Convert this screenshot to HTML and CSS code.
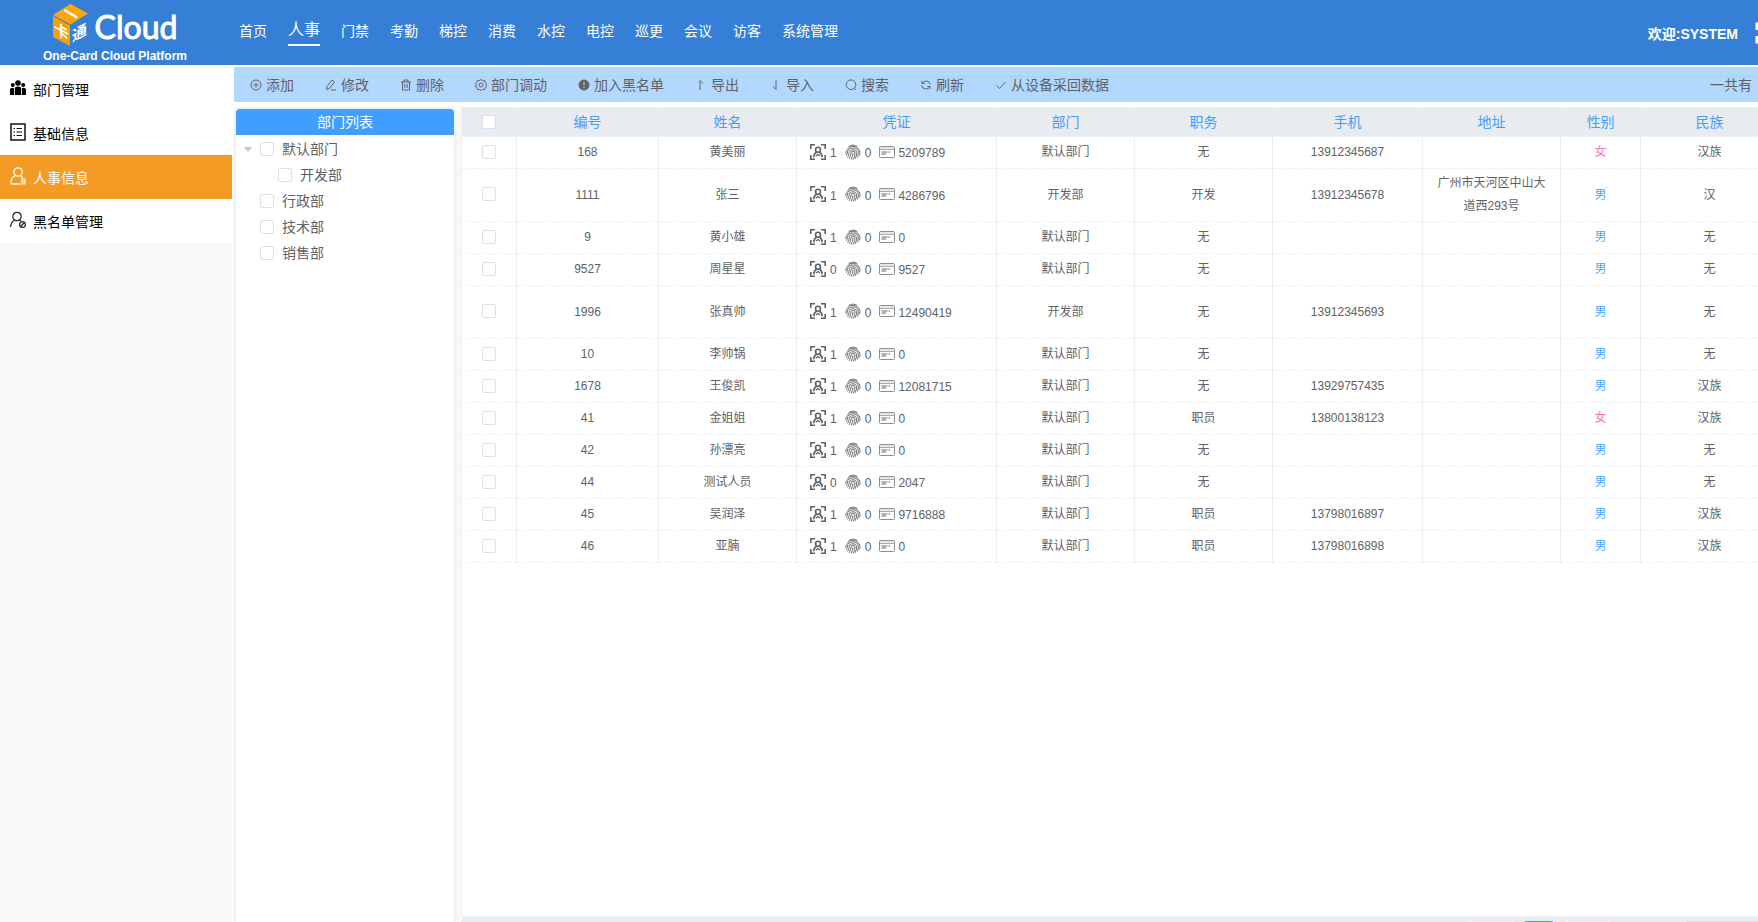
FILE: index.html
```html
<!DOCTYPE html>
<html lang="zh-CN">
<head>
<meta charset="utf-8">
<title>One-Card Cloud Platform</title>
<link rel="stylesheet" href="styles.css">
</head>
<body>
<svg class="sprite" aria-hidden="true">
  <symbol id="face" viewBox="0 0 16 16"><g fill="none" stroke="currentColor" stroke-width="1.6"><path d="M.8 5V.8H5M11 .8h4.200V5M15.200 11v4.200H11M5 15.200H.8V11"/><circle cx="8" cy="5.800" r="2.500"/><path d="M3.800 13.200c0-2.600 1.200-4.200 2.800-5M12.200 13.200c0-2.600-1.200-4.200-2.800-5"/><path d="M6 12l2-1.500 2 1.500" stroke-width="1.200"/></g></symbol>
  <symbol id="finger" viewBox="0 0 16 16"><g fill="none" stroke="currentColor" stroke-width=".9" stroke-linecap="round"><path d="M4 2.200Q8-.5 12 2.200M1.800 5.500Q4 2.300 8 2.300t6.300 3.500q1.100 2.700.4 5.200M.8 9.500q-.1-1.300.3-2.500M1.500 11.500Q2.500 9.500 2.500 8q.3-4 5.500-4t5.300 4.200q.1 2.800-.8 5M2.800 13.200Q4.200 11 4.200 8.500q0-2.800 3.700-2.800t3.800 2.800q.1 3-1.400 6M4.300 14.500Q6 11.500 6 9q0-1.700 2-1.700T10 9q0 3-1.600 6.300M6.300 15.200Q8 12 8 9.200"/></g></symbol>
  <symbol id="card" viewBox="0 0 16 16"><rect x=".5" y="2.500" width="15" height="11" rx="1" fill="#fff" stroke="#8a8d92"/><path d="M1 3h14v2.500H1z" fill="#e4e6ea"/><path d="M1 5.500h14" stroke="#a9acb1"/><path d="M2.500 8h6M9.500 8h1.500M2.500 10H7" stroke="#606266"/></symbol>
</svg>
<div class="app">
<header class="topbar">
  <div class="brand">
    <div class="brand-logo">
      <svg class="cube" width="36" height="43" viewBox="0 0 36 43" aria-hidden="true">
        <path d="M17.500 0 35 9.500 17.500 20.500 0 11z" fill="#fea60f"/>
        <path d="M0 12l17 9.500V42L0 33z" fill="#fa9d08"/>
        <path d="M11.500 6 24 13.500" stroke="#fff" stroke-width="2.500"/>
        <text class="cube-text" transform="translate(1 29) skewY(28)" font-size="15">卡</text>
        <text class="cube-text" transform="translate(19 38) skewY(-28)" font-size="15">通</text>
      </svg>
      <span class="brand-name">Cloud</span>
    </div>
    <div class="brand-sub">One-Card Cloud Platform</div>
  </div>
  <nav class="mainnav">
    <a href="#">首页</a><a href="#" class="current">人事</a><a href="#">门禁</a><a href="#">考勤</a><a href="#">梯控</a><a href="#">消费</a><a href="#">水控</a><a href="#">电控</a><a href="#">巡更</a><a href="#">会议</a><a href="#">访客</a><a href="#">系统管理</a>
  </nav>
  <div class="welcome">欢迎:SYSTEM</div>
  <button class="fullscreen" aria-label="全屏"><svg width="22" height="22" viewBox="0 0 22 22" fill="none" stroke="#fff" stroke-width="3"><path d="M2 8V2h6M14 2h6v6M20 14v6h-6M8 20H2v-6"/></svg></button>
</header>
<div class="body">
<nav class="sidebar">
  <a href="#"><svg width="16" height="18" viewBox="0 0 16 18"><circle cx="8" cy="4" r="2.800"/><circle cx="2.800" cy="6" r="2"/><circle cx="13.200" cy="6" r="2"/><path d="M4.800 16V9.500Q4.800 7.500 8 7.500t3.200 2V16zM0 16v-5.500Q0 8.800 2.500 8.800q1.500 0 1.500.7V16zM16 16v-5.500q0-1.700-2.500-1.700-1.500 0-1.500.7V16z"/></svg>部门管理</a>
  <a href="#"><svg width="16" height="18" viewBox="0 0 16 18" fill="none" stroke="#111"><path d="M1 1h14v16H1z" stroke-width="1.500"/><path d="M3.500 5.500H5M3.500 9H5M3.500 12.500H5M6.500 5.500H12M6.500 9H12M6.500 12.500H12" stroke-width="1.200"/></svg>基础信息</a>
  <a href="#" class="active"><svg width="16" height="18" viewBox="0 0 16 18" fill="none" stroke="#fff" stroke-width="1.300"><circle cx="8" cy="5" r="4.200"/><path d="M5.500 8.500Q.8 11 .8 15.500q0 1.500 1.500 1.500H10M10.500 8.500l2.500 2.500"/><path d="M11.500 12h4v5h-4z" fill="#fff" opacity=".6"/></svg>人事信息</a>
  <a href="#"><svg width="16" height="18" viewBox="0 0 16 18" fill="none" stroke="#222" stroke-width="1.200"><circle cx="7" cy="5.500" r="4.200"/><path d="M4.500 9Q.8 11.500.6 16M9.500 9l1.500 1"/><circle cx="12.500" cy="13.500" r="2.900"/><path d="M10.500 15.500l4-4"/></svg>黑名单管理</a>
</nav>
<main class="main">
  <div class="toolbar">
    <button><svg viewBox="0 0 14 14"><circle cx="7" cy="7" r="5"/><path d="M7 4.500v5M4.500 7h5"/></svg>添加</button>
    <button><svg viewBox="0 0 14 14"><path d="M2.500 11.500l.5-3L8 2l2.500 2-5 6.500zM7 12h5"/></svg>修改</button>
    <button><svg viewBox="0 0 14 14"><path d="M2 4h10M5 4V2h4v2M3.500 4v8h7V4M5.800 6v4M8.200 6v4"/></svg>删除</button>
    <button><svg viewBox="0 0 14 14"><path d="M7 1.500l1.500 1 2-.2.500 2 1.500 1-.7 1.700.7 1.700-1.500 1-.5 2-2-.2-1.500 1-1.500-1-2 .2-.5-2-1.500-1L2.200 7l-.7-1.700 1.500-1 .5-2 2 .2z"/><circle cx="7" cy="7" r="2"/></svg>部门调动</button>
    <button><svg viewBox="0 0 14 14"><circle cx="7" cy="7" r="5" fill="#606266"/><path d="M7 4v3.500M7 8.700V10" stroke="#b3d8ff"/></svg>加入黑名单</button>
    <button><svg viewBox="0 0 14 14"><path d="M6 12V2.500L9 5.500"/></svg>导出</button>
    <button><svg viewBox="0 0 14 14"><path d="M7 2v9.500L4 8.500"/></svg>导入</button>
    <button><svg viewBox="0 0 14 14"><circle cx="7" cy="6.700" r="4.800"/><path d="M10.300 10.200l1.500 1.600"/></svg>搜索</button>
    <button><svg viewBox="0 0 14 14"><path d="M3 2.800v2.700h2.700M3.200 5.300a4.400 4.400 0 0 1 8.200 1.200M11 11.200V8.500H8.300M10.800 8.700A4.400 4.400 0 0 1 2.600 7.500"/></svg>刷新</button>
    <button><svg viewBox="0 0 14 14"><path d="M2.500 7.500l3 3 6-6.500"/></svg>从设备采回数据</button>
    <span class="total">一共有</span>
  </div>
  <div class="content">
    <section class="tree">
      <h2>部门列表</h2>
      <ul>
        <li><i class="caret"></i><label><input type="checkbox">默认部门</label></li>
        <li class="child"><i class="caret none"></i><label><input type="checkbox">开发部</label></li>
        <li><i class="caret none"></i><label><input type="checkbox">行政部</label></li>
        <li><i class="caret none"></i><label><input type="checkbox">技术部</label></li>
        <li><i class="caret none"></i><label><input type="checkbox">销售部</label></li>
      </ul>
    </section>
    <section class="listing">
      <div class="table-wrap">
      <table>
        <colgroup><col class="c-check"><col class="c-no"><col class="c-mid"><col class="c-cred"><col class="c-mid"><col class="c-mid"><col class="c-tel"><col class="c-mid"><col class="c-sex"><col class="c-mid"></colgroup>
        <thead><tr><th><input type="checkbox" aria-label="全选"></th><th>编号</th><th>姓名</th><th>凭证</th><th>部门</th><th>职务</th><th>手机</th><th>地址</th><th>性别</th><th>民族</th></tr></thead>
        <tbody>
        <tr><td><input type="checkbox" aria-label="选择 168"></td><td>168</td><td>黄美丽</td><td><div class="cred"><svg><use href="#face"/></svg><span>1</span><svg><use href="#finger"/></svg><span>0</span><svg><use href="#card"/></svg><span>5209789</span></div></td><td>默认部门</td><td>无</td><td>13912345687</td><td></td><td class="female">女</td><td>汉族</td></tr>
        <tr class="tall"><td><input type="checkbox" aria-label="选择 1111"></td><td>1111</td><td>张三</td><td><div class="cred"><svg><use href="#face"/></svg><span>1</span><svg><use href="#finger"/></svg><span>0</span><svg><use href="#card"/></svg><span>4286796</span></div></td><td>开发部</td><td>开发</td><td>13912345678</td><td>广州市天河区中山大道西293号</td><td class="male">男</td><td>汉</td></tr>
        <tr><td><input type="checkbox" aria-label="选择 9"></td><td>9</td><td>黄小雄</td><td><div class="cred"><svg><use href="#face"/></svg><span>1</span><svg><use href="#finger"/></svg><span>0</span><svg><use href="#card"/></svg><span>0</span></div></td><td>默认部门</td><td>无</td><td></td><td></td><td class="male">男</td><td>无</td></tr>
        <tr><td><input type="checkbox" aria-label="选择 9527"></td><td>9527</td><td>周星星</td><td><div class="cred"><svg><use href="#face"/></svg><span>0</span><svg><use href="#finger"/></svg><span>0</span><svg><use href="#card"/></svg><span>9527</span></div></td><td>默认部门</td><td>无</td><td></td><td></td><td class="male">男</td><td>无</td></tr>
        <tr class="tall"><td><input type="checkbox" aria-label="选择 1996"></td><td>1996</td><td>张真帅</td><td><div class="cred"><svg><use href="#face"/></svg><span>1</span><svg><use href="#finger"/></svg><span>0</span><svg><use href="#card"/></svg><span>12490419</span></div></td><td>开发部</td><td>无</td><td>13912345693</td><td></td><td class="male">男</td><td>无</td></tr>
        <tr><td><input type="checkbox" aria-label="选择 10"></td><td>10</td><td>李帅锅</td><td><div class="cred"><svg><use href="#face"/></svg><span>1</span><svg><use href="#finger"/></svg><span>0</span><svg><use href="#card"/></svg><span>0</span></div></td><td>默认部门</td><td>无</td><td></td><td></td><td class="male">男</td><td>无</td></tr>
        <tr><td><input type="checkbox" aria-label="选择 1678"></td><td>1678</td><td>王俊凯</td><td><div class="cred"><svg><use href="#face"/></svg><span>1</span><svg><use href="#finger"/></svg><span>0</span><svg><use href="#card"/></svg><span>12081715</span></div></td><td>默认部门</td><td>无</td><td>13929757435</td><td></td><td class="male">男</td><td>汉族</td></tr>
        <tr><td><input type="checkbox" aria-label="选择 41"></td><td>41</td><td>金姐姐</td><td><div class="cred"><svg><use href="#face"/></svg><span>1</span><svg><use href="#finger"/></svg><span>0</span><svg><use href="#card"/></svg><span>0</span></div></td><td>默认部门</td><td>职员</td><td>13800138123</td><td></td><td class="female">女</td><td>汉族</td></tr>
        <tr><td><input type="checkbox" aria-label="选择 42"></td><td>42</td><td>孙漂亮</td><td><div class="cred"><svg><use href="#face"/></svg><span>1</span><svg><use href="#finger"/></svg><span>0</span><svg><use href="#card"/></svg><span>0</span></div></td><td>默认部门</td><td>无</td><td></td><td></td><td class="male">男</td><td>无</td></tr>
        <tr><td><input type="checkbox" aria-label="选择 44"></td><td>44</td><td>测试人员</td><td><div class="cred"><svg><use href="#face"/></svg><span>0</span><svg><use href="#finger"/></svg><span>0</span><svg><use href="#card"/></svg><span>2047</span></div></td><td>默认部门</td><td>无</td><td></td><td></td><td class="male">男</td><td>无</td></tr>
        <tr><td><input type="checkbox" aria-label="选择 45"></td><td>45</td><td>吴润泽</td><td><div class="cred"><svg><use href="#face"/></svg><span>1</span><svg><use href="#finger"/></svg><span>0</span><svg><use href="#card"/></svg><span>9716888</span></div></td><td>默认部门</td><td>职员</td><td>13798016897</td><td></td><td class="male">男</td><td>汉族</td></tr>
        <tr><td><input type="checkbox" aria-label="选择 46"></td><td>46</td><td>亚腩</td><td><div class="cred"><svg><use href="#face"/></svg><span>1</span><svg><use href="#finger"/></svg><span>0</span><svg><use href="#card"/></svg><span>0</span></div></td><td>默认部门</td><td>职员</td><td>13798016898</td><td></td><td class="male">男</td><td>汉族</td></tr>
        </tbody>
      </table>
      </div>
      <div class="pager"><button class="page-step" aria-label="上一页"></button><button class="page-now" aria-label="当前页"></button><button class="page-step" aria-label="下一页"></button><input class="page-jump" type="text" aria-label="页码"></div>
    </section>
  </div>
</main>
</div>
</div>
</body>
</html>
```

FILE: styles.css
```css
* { box-sizing: border-box; }
body {
  margin: 0;
  background: #fff;
  color: #606266;
  font: 14px/20px "Liberation Sans", "Noto Sans CJK SC", sans-serif;
}
a { color: inherit; text-decoration: none; }
button { padding: 0; border: 0; background: none; color: inherit; font: inherit; }
ul { margin: 0; padding: 0; list-style: none; }
svg { display: block; flex: none; }
.sprite { display: none; }
input[type="checkbox"] {
  appearance: none;
  display: block;
  flex: none;
  width: 14px;
  height: 14px;
  margin: 0;
  border: 1px solid #dcdfe6;
  border-radius: 2px;
  background: #fff;
}

.app { display: flex; flex-direction: column; height: 100vh; overflow: hidden; }

/* Top bar */
.topbar {
  display: flex;
  align-items: center;
  flex: none;
  height: 65px;
  background: #3580d6;
  color: #fff;
  overflow: hidden;
}
.brand { flex: none; width: 230px; text-align: center; }
.brand-logo { display: flex; justify-content: center; align-items: center; gap: 6px; height: 43px; margin-top: 4px; }
.cube { overflow: visible; }
.brand-name { font: 32px/40px Lato, sans-serif; -webkit-text-stroke: 1px #fff; padding-top: 2px; }
.cube-text { fill: #fff; font-family: "Noto Sans CJK SC", sans-serif; font-weight: 700; }
.brand-sub { font-size: 12px; font-weight: 700; line-height: 18px; }
.mainnav { display: flex; align-items: center; gap: 21px; height: 61px; margin-bottom: 4px; padding-left: 9px; white-space: nowrap; }
.mainnav .current { border-bottom: 2px solid #fff; font-size: 16px; line-height: 28px; }
.welcome { margin-left: auto; padding-top: 2px; font-weight: 700; white-space: nowrap; }
.fullscreen { margin: 0 -19px 0 17px; }

.body { display: flex; flex: 1; gap: 2px; min-height: 0; padding-top: 2px; }

/* Side menu */
.sidebar { flex: none; width: 232px; background: #f8f8f8; color: #000; }
.sidebar a { display: flex; align-items: center; gap: 7px; height: 44px; padding: 2px 0 0 10px; background: #fff; }
.sidebar a svg { margin-bottom: 4px; }
.sidebar .active { background: #f49b25; color: #fff; }

.main { display: flex; flex: 1; flex-direction: column; min-width: 0; }
.toolbar {
  display: flex;
  align-items: center;
  flex: none;
  gap: 30px;
  height: 35px;
  padding: 0 6px 0 15px;
  background: #b3d8ff;
  white-space: nowrap;
}
.toolbar button { display: flex; align-items: center; gap: 3px; }
.toolbar svg { width: 14px; height: 14px; fill: none; stroke: #606266; stroke-width: 1; }
.total { margin-left: auto; }

.content { display: flex; flex: 1; gap: 6px; min-height: 0; padding-top: 5px; background: #fff; }

/* Department tree */
.tree {
  flex: none;
  width: 221px;
  border: solid #ebeef5;
  border-width: 2px 1px 0 2px;
  border-radius: 4px 4px 0 0;
  box-shadow: 4px 4px 8px rgba(0, 0, 0, .06);
}
.tree h2 {
  margin: 0 0 1px;
  border-radius: 4px 4px 0 0;
  background: #409eff;
  color: #fff;
  font-size: 14px;
  font-weight: 400;
  line-height: 26px;
  text-align: center;
}
.tree li { display: flex; align-items: center; gap: 8px; height: 26px; padding-left: 8px; }
.tree .child { padding-left: 26px; }
.tree label { display: flex; align-items: center; gap: 8px; }
.caret { width: 8px; border: 4px solid transparent; border-top: 5px solid #c0c4cc; border-bottom: 0; }
.caret.none { visibility: hidden; }

/* Personnel table */
.listing { display: flex; flex: 1; flex-direction: column; min-width: 0; background: #fff; position: relative; }
.table-wrap { flex: 1; min-height: 0; overflow: hidden; border: solid #ebeef5; border-width: 1px 0 1px 1px; }
table { width: 100%; min-width: 1317px; table-layout: fixed; border-collapse: separate; border-spacing: 0; font-size: 12px; line-height: 23px; }
.c-check { width: 55px; }
.c-no { width: 142px; }
.c-mid { width: 138px; }
.c-cred { width: 200px; }
.c-tel { width: 150px; }
.c-sex { width: 80px; }
th, td { padding: 0 10px; border-right: 1px solid #ebeef5; text-align: center; }
th { height: 29px; border-bottom: 1px solid #ebeef5; background: #e8ebf0; color: #409eff; font-size: 14px; font-weight: 400; }
td { height: 32px; border-bottom: 1px dashed #ebeef5; }
td:first-child { padding-bottom: 2px; }
.tall td { height: 53px; }
th input, td input { margin: 0 auto !important; }
.male { color: #46aaff; }
.female { color: #ff73b4; }
.cred { display: flex; align-items: center; gap: 4px; padding-left: 3px; line-height: 20px; }
.cred svg { width: 16px; height: 16px; margin-bottom: 2px; }
.cred span { padding-top: 1px; }
.cred span + svg { margin-left: 4px; }
.cred span:last-child { margin-left: -1px; }

.pager { display: flex; flex: none; justify-content: flex-end; gap: 10px; height: 5px; padding-top: 4px; border-radius: 4px 0 0 0; background: #e8ebf0; overflow: hidden; }
.page-step { width: 47px; height: 28px; border-radius: 3px; background: #f4f4f5; }
.page-now { width: 30px; height: 28px; border-radius: 3px; background: #409eff; }
.page-jump { width: 71px; height: 28px; margin-left: 66px; padding: 0; border: 1px solid #dcdfe6; border-right: 0; }
```
